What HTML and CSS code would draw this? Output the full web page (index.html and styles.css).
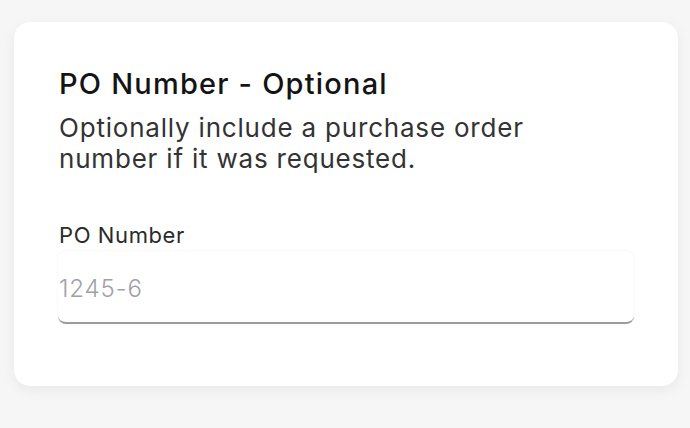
FILE: index.html
```html
<!DOCTYPE html>
<html>
<head>
<meta charset="utf-8">
<link rel="stylesheet" href="styles.css">
</head>
<body>
<div class="card">
  <h2 class="title">PO Number - Optional</h2>
  <p class="desc">Optionally include a purchase order number if it was requested.</p>
  <label class="label" for="po">PO Number</label>
  <input id="po" class="input" type="text" placeholder="1245-6">
</div>
</body>
</html>
```
FILE: styles.css
```css
html, body { margin: 0; padding: 0; }
body {
  background: #f6f6f6;
  font-family: Inter, "Open Sans", sans-serif;
  width: 690px;
  height: 428px;
  overflow: hidden;
}
.card {
  margin: 22px 0 0 14px;
  width: 664px;
  height: 364px;
  box-sizing: border-box;
  background: #fff;
  border-radius: 16px;
  box-shadow: 0 4px 14px rgba(0,0,0,0.06);
  padding: 44px 44px 0 44px;
  display: flex;
  flex-direction: column;
}
.title {
  margin: 0 0 0 1px;
  font-size: 29px;
  line-height: 36px;
  font-weight: 500;
  color: #141414;
  letter-spacing: 1.2px;
}
.desc {
  margin: 10px 0 0 1px;
  font-size: 26px;
  line-height: 31px;
  font-weight: 400;
  color: #333;
  max-width: 500px;
  letter-spacing: 0.8px;
}
.label {
  margin: 47px 0 0 1px;
  font-size: 22px;
  line-height: 28px;
  font-weight: 400;
  color: #2b2b2b;
  letter-spacing: 0.6px;
}
.input {
  margin-top: 2px;
  height: 73px;
  box-sizing: border-box;
  border: none;
  border-bottom: 2px solid #9b9ca3;
  border-radius: 8px;
  box-shadow: 0 0 2px rgba(0,0,0,0.08);
  padding: 3px 0 0 1px;
  font-family: inherit;
  font-size: 24px;
  font-weight: 300;
  letter-spacing: 0.9px;
  color: #333;
  outline: none;
  background: #fff;
}
.input::placeholder { color: #a0a1a7; }
```
